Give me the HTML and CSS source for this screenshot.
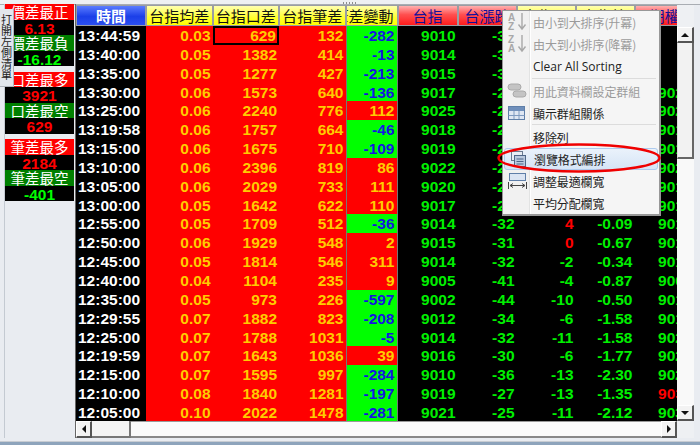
FILE: index.html
```html
<!DOCTYPE html>
<html>
  <head>
    <meta charset="UTF-8" />
    <title>報價表</title>
    <link rel="stylesheet" href="styles.css">
  </head>
  <body>
    <div class="app">
      <div class="top-bar"><span class="grip"></span></div>
      <div class="main">
        <div class="side">
          <div class="group">
            <div class="label red">價差最正</div><div class="value red-text">6.13</div>
            <div class="label green">價差最負</div><div class="value green-text">-16.12</div>
          </div>
          <div class="group">
            <div class="label red">口差最多</div><div class="value red-text">3921</div>
            <div class="label green">口差最空</div><div class="value red-text">629</div>
          </div>
          <div class="group">
            <div class="label red">筆差最多</div><div class="value red-text">2184</div>
            <div class="label green">筆差最空</div><div class="value green-text">-401</div>
          </div>
        </div>
        <div class="grid-wrap">
          <div class="table">
            <div class="row head">
              <div class="blue">時間</div>
              <div class="yellow">台指均差</div>
              <div class="yellow">台指口差</div>
              <div class="yellow">台指筆差</div>
              <div class="yellow clip">筆差變動</div>
              <div class="pink">台指</div>
              <div class="pink">台漲跌</div>
              <div class="yellow">台指量</div>
              <div class="yellow">台指比</div>
              <div class="pink">期權</div>
            </div>
            <div class="row"><div>13:44:59</div><div>0.03</div><div class="selected">629</div><div>132</div><div class="down">-282</div><div>9010</div><div>-36</div><div></div><div></div><div></div></div>
            <div class="row"><div>13:40:00</div><div>0.05</div><div>1382</div><div>414</div><div class="down">-13</div><div>9014</div><div>-32</div><div></div><div></div><div></div></div>
            <div class="row"><div>13:35:00</div><div>0.05</div><div>1277</div><div>427</div><div class="down">-213</div><div>9015</div><div>-31</div><div></div><div></div><div></div></div>
            <div class="row"><div>13:30:00</div><div>0.06</div><div>1573</div><div>640</div><div class="down">-136</div><div>9017</div><div>-29</div><div></div><div></div><div>9021</div></div>
            <div class="row"><div>13:25:00</div><div>0.06</div><div>2240</div><div>776</div><div class="up">112</div><div>9025</div><div>-21</div><div></div><div></div><div>9025</div></div>
            <div class="row"><div>13:19:58</div><div>0.06</div><div>1757</div><div>664</div><div class="down">-46</div><div>9018</div><div>-28</div><div></div><div></div><div>9018</div></div>
            <div class="row"><div>13:15:00</div><div>0.06</div><div>1675</div><div>710</div><div class="down">-109</div><div>9019</div><div>-27</div><div></div><div></div><div>9019</div></div>
            <div class="row"><div>13:10:00</div><div>0.06</div><div>2396</div><div>819</div><div class="up">86</div><div>9022</div><div>-24</div><div></div><div></div><div>9022</div></div>
            <div class="row"><div>13:05:00</div><div>0.06</div><div>2029</div><div>733</div><div class="up">111</div><div>9020</div><div>-26</div><div></div><div></div><div>9017</div></div>
            <div class="row"><div>13:00:00</div><div>0.05</div><div>1642</div><div>622</div><div class="up">110</div><div>9017</div><div>-29</div><div></div><div></div><div>9016</div></div>
            <div class="row"><div>12:55:00</div><div>0.05</div><div>1709</div><div>512</div><div class="down">-36</div><div>9014</div><div>-32</div><div class="red-text">4</div><div>-0.09</div><div>9014</div></div>
            <div class="row"><div>12:50:00</div><div>0.06</div><div>1929</div><div>548</div><div class="up">2</div><div>9015</div><div>-31</div><div class="red-text">0</div><div>-0.67</div><div>9015</div></div>
            <div class="row"><div>12:45:00</div><div>0.05</div><div>1814</div><div>546</div><div class="up">311</div><div>9014</div><div>-32</div><div>-2</div><div>-0.34</div><div>9014</div></div>
            <div class="row"><div>12:40:00</div><div>0.04</div><div>1104</div><div>235</div><div class="up">9</div><div>9005</div><div>-41</div><div>-4</div><div>-0.87</div><div>9005</div></div>
            <div class="row"><div>12:35:00</div><div>0.05</div><div>973</div><div>226</div><div class="down">-597</div><div>9002</div><div>-44</div><div>-10</div><div>-0.50</div><div>9012</div></div>
            <div class="row"><div>12:29:55</div><div>0.07</div><div>1882</div><div>823</div><div class="down">-208</div><div>9012</div><div>-34</div><div>-6</div><div>-1.58</div><div>9012</div></div>
            <div class="row"><div>12:25:00</div><div>0.07</div><div>1788</div><div>1031</div><div class="down">-5</div><div>9014</div><div>-32</div><div>-11</div><div>-1.58</div><div>9025</div></div>
            <div class="row"><div>12:19:59</div><div>0.07</div><div>1643</div><div>1036</div><div class="up">39</div><div>9016</div><div>-30</div><div>-6</div><div>-1.77</div><div>9027</div></div>
            <div class="row"><div>12:15:00</div><div>0.07</div><div>1595</div><div>997</div><div class="down">-284</div><div>9010</div><div>-36</div><div>-13</div><div>-2.30</div><div>9028</div></div>
            <div class="row"><div>12:10:00</div><div>0.08</div><div>1840</div><div>1281</div><div class="down">-197</div><div>9019</div><div>-27</div><div>-13</div><div>-1.35</div><div class="red-text">9030</div></div>
            <div class="row"><div>12:05:00</div><div>0.10</div><div>2022</div><div>1478</div><div class="down">-281</div><div>9021</div><div>-25</div><div>-11</div><div>-2.12</div><div>9032</div></div>
          </div>

          <div class="vscroll">
            <div class="vscroll-gap"></div>
            <div class="btn"><span class="arrow-up"></span></div>
            <div class="vthumb"></div>
            <div class="vtrack"></div>
            <div class="btn"><span class="arrow-down"></span></div>
          </div>
          <div class="hscroll">
            <div class="btn"><span class="arrow-left"></span></div>
            <div class="hthumb"></div>
            <div class="htrack"></div>
            <div class="btn"><span class="arrow-right"></span></div>
          </div>
          <div class="corner"></div>
        </div>
      </div>
      <div class="bottom-bar"></div>

      <div class="side-tab">打開左側清單</div>

      <div class="menu">
        <div class="item off">
          <span class="icon">
            <svg width="22" height="20" viewBox="0 0 22 20">
              <text x="1" y="9" class="az">A</text><text x="1" y="18" class="az">Z</text>
              <path d="M15 1v15M11.5 12.5l3.5 4.5 3.5-4.5" fill="none" stroke="#a8a8a8" stroke-width="1.4"/>
            </svg>
          </span>由小到大排序(升冪)
        </div>
        <div class="item off">
          <span class="icon">
            <svg width="22" height="20" viewBox="0 0 22 20">
              <text x="1" y="9" class="az">Z</text><text x="1" y="18" class="az">A</text>
              <path d="M15 1v15M11.5 12.5l3.5 4.5 3.5-4.5" fill="none" stroke="#a8a8a8" stroke-width="1.4"/>
            </svg>
          </span>由大到小排序(降冪)
        </div>
        <div class="item latin"><span class="icon"></span>Clear All Sorting</div>
        <div class="sep"></div>
        <div class="item off">
          <span class="icon">
            <svg width="22" height="20" viewBox="0 0 22 20">
              <rect x="1" y="3" width="13" height="6" rx="3" fill="#c4c4c4" stroke="#aaa"/>
              <rect x="6" y="10" width="13" height="6" rx="3" fill="#c4c4c4" stroke="#aaa"/>
            </svg>
          </span>用此資料欄設定群組
        </div>
        <div class="item">
          <span class="icon">
            <svg width="22" height="20" viewBox="0 0 22 20">
              <rect x="1.5" y="3.5" width="16" height="13" fill="#dfe7f3" stroke="#5f7fa8"/>
              <rect x="2" y="4" width="15" height="4" fill="#6f8fbb"/>
              <path d="M1.5 12.5h16M7 8v8M12 8v8" stroke="#7f9bc0"/>
            </svg>
          </span>顯示群組關係
        </div>
        <div class="sep tight"></div>
        <div class="item"><span class="icon"></span>移除列</div>
        <div class="item hot">
          <span class="icon">
            <svg width="22" height="20" viewBox="0 0 22 20">
              <rect x="3.5" y="2.5" width="11" height="9" fill="#e8edf4" stroke="#6a7a90"/>
              <rect x="6.5" y="6.5" width="11" height="11" fill="#b9c9df" stroke="#4f6688"/>
              <path d="M8.5 10h7M8.5 12.5h7M8.5 15h7" stroke="#4f6688"/>
            </svg>
          </span>瀏覽格式編排
        </div>
        <div class="item">
          <span class="icon">
            <svg width="22" height="20" viewBox="0 0 22 20">
              <rect x="2.5" y="2.5" width="16" height="7" fill="#dbe5f3" stroke="#5f7fa8"/>
              <path d="M1.5 11v7M19.5 11v7M3 14.5h15M3 14.5l3-2M3 14.5l3 2M18 14.5l-3-2M18 14.5l-3 2" fill="none" stroke="#444"/>
            </svg>
          </span>調整最適欄寬
        </div>
        <div class="item"><span class="icon"></span>平均分配欄寬</div>
      </div>

      <svg class="ring" width="168" height="34" viewBox="0 0 168 34">
        <ellipse cx="83" cy="17" rx="80.5" ry="13.5" fill="none" stroke="#f00000" stroke-width="2.5"/>
      </svg>
    </div>
  </body>
</html>
```

FILE: styles.css
```css
* {
  box-sizing: border-box;
}

body {
  margin: 0;
  background-color: #e9ecf1;
  font-family: "Liberation Sans", "Noto Sans CJK TC", sans-serif;
}

.app {
  position: relative;
  display: flex;
  flex-direction: column;
  width: 700px;
  height: 445px;
  overflow: hidden;
  background-color: #e9ecf1;
}

.top-bar {
  display: flex;
  justify-content: center;
  height: 5px;
  padding-top: 2px;
  background-color: #eef0f3;
  border-bottom: 1px solid #a9adb3;
}

.grip {
  width: 14px;
  height: 2px;
  background-image: linear-gradient(90deg, #8d8d8d 50%, transparent 50%);
  background-size: 3px 2px;
}

.main {
  display: flex;
  flex: 1;
  min-height: 0;
  padding-left: 5px;
  padding-right: 5px;
}

.bottom-bar {
  height: 7px;
  background: linear-gradient(#e9ecf1 0 3px, #c8ccd2 3px 4px, #8ea4bc 4px);
}

/* left summary list */
.side {
  width: 72px;
  flex: none;
  margin-top: -1px;
  margin-left: -1px;
  padding-right: 1px;
  border-right: 1px solid #666;
  border-left: 1px solid #c4cad2;
}

.group {
  margin-bottom: 5.5px;
}

.label {
  height: 15.5px;
  font-size: 14.5px;
  line-height: 18px;
  text-align: center;
  color: #fff;
  white-space: nowrap;
  overflow: hidden;
}

.label.red {
  background-color: #ff0000;
}

.label.green {
  background-color: #008000;
}

.value {
  height: 15.5px;
  background-color: #000;
  font-size: 15.5px;
  font-weight: bold;
  line-height: 18px;
  text-align: center;
  overflow: hidden;
}

.red-text {
  color: #ff0000 !important;
}

.green-text {
  color: #00ff00;
}

.side-tab {
  position: absolute;
  left: 0;
  top: 9px;
  width: 14px;
  height: 78px;
  padding-top: 6px;
  background-color: #e2e6ec;
  border-right: 1px solid #aeb3ba;
  border-bottom: 1px solid #aeb3ba;
  font-size: 11px;
  line-height: 11px;
  text-align: center;
  color: #222;
}

/* quote table */
.grid-wrap {
  display: grid;
  flex: 1;
  grid-template-columns: 601px 17px;
  grid-template-rows: 416px 17px;
}

.table {
  overflow: hidden;
  background-color: #000;
}

.row {
  display: grid;
  grid-template-columns: 70px 66.5px 66.5px 66.5px 52px 60px 59px 59px 59px 60px;
  height: 18.85px;
  font-size: 15.5px;
  font-weight: bold;
  line-height: 20px;
  color: #00f000;
  white-space: nowrap;
}

.row > div {
  padding-right: 2px;
  text-align: right;
  overflow: hidden;
}

.row > div:first-child {
  padding: 0 0 0 2px;
  text-align: left;
  color: #fff;
}

.row > div:nth-child(2),
.row > div:nth-child(3),
.row > div:nth-child(4) {
  background-color: #ff0000;
  color: #ffcc00;
}

.row > div:nth-child(5) {
  border-left: 1px solid #777;
  border-right: 1px solid #777;
}

.row > .down {
  background-color: #00ff00;
  color: #1414e0;
}

.row > .up {
  background-color: #ff0000;
  color: #ffcc00;
}

.row > .selected {
  border: 2px solid #000;
  line-height: 16px;
  padding-right: 1px;
}

.row.head {
  height: 21px;
  font-size: 15px;
  font-weight: normal;
  font-family: "Noto Sans CJK TC", sans-serif;
  line-height: 20px;
  background-color: #9a9da3;
}

.row.head > div {
  padding: 0;
  text-align: center;
  border: 1px solid #9a9da3;
}

.row.head > .blue {
  padding: 0;
  text-align: center;
  background: linear-gradient(#5a7cff, #1b3fe8 55%, #2b4ff0);
  color: #fff;
  font-weight: bold;
}

.row.head > .yellow {
  background: linear-gradient(#ffffb0, #ffff30 60%, #ffff00);
  color: #111;
}

.row.head > .pink {
  background: linear-gradient(#ffb0b0, #ff5050 45%, #ff1c1c);
  color: #10109a;
}

.row.head > .clip {
  display: flex;
  justify-content: flex-end;
  padding-right: 3px;
  color: #111;
}

/* scrollbars */
.vscroll {
  display: flex;
  flex-direction: column;
  background-color: #f4f4f4;
}

.vscroll-gap {
  height: 22px;
  background-color: #eef0f3;
}

.vthumb {
  height: 116px;
  background-color: #f2f2f2;
  border-right: 2px solid #666;
  border-bottom: 2px solid #666;
  border-left: 1px solid #ddd;
}

.vtrack {
  flex: 1;
  background-color: #f9f9f9;
}

.vscroll .btn {
  height: 16px;
  flex: none;
}

.hscroll {
  display: flex;
  background-color: #f5f5f5;
}

.hthumb {
  width: 39px;
  background-color: #f4f4f4;
  border-right: 2px solid #777;
  border-bottom: 2px solid #777;
}

.htrack {
  flex: 1;
  background-color: #fafafa;
  border-top: 1px solid #999;
  border-bottom: 2px solid #888;
}

.hscroll .btn {
  width: 16px;
  flex: none;
}

.corner {
  background-color: #eef0f3;
}

.btn {
  display: flex;
  align-items: center;
  justify-content: center;
  background-color: #f3f3f3;
  border-top: 1px solid #fff;
  border-left: 1px solid #fff;
  border-right: 2px solid #555;
  border-bottom: 2px solid #555;
}

.arrow-up,
.arrow-down,
.arrow-left,
.arrow-right {
  width: 0;
  height: 0;
  border: 4px solid transparent;
}

.arrow-up {
  border-top: none;
  border-bottom-color: #111;
}

.arrow-down {
  border-bottom: none;
  border-top-color: #111;
}

.arrow-left {
  border-left: none;
  border-right-color: #111;
}

.arrow-right {
  border-right: none;
  border-left-color: #111;
}

/* context menu */
.menu {
  position: absolute;
  left: 502px;
  top: 10px;
  width: 159px;
  height: 206px;
  padding: 0 1px;
  background: linear-gradient(90deg, #f1f1f1 26px, #e2e3e3 26px 27px, #fff 27px 28px, #f5f5f5 28px);
  border: 1px solid #979797;
  border-width: 1px 2px 2px 1px;
  font-family: "Noto Sans CJK TC", sans-serif;
  font-size: 12px;
  color: #222;
}

.item {
  display: flex;
  align-items: center;
  height: 22px;
  white-space: nowrap;
  letter-spacing: -0.1px;
}

.item.off {
  color: #9b9b9b;
}

.item.latin {
  font-family: "Open Sans", sans-serif;
  letter-spacing: 0;
}

.item.hot {
  background: linear-gradient(#eaf2fb, #d6e5f6);
  border: 1px solid #aecbee;
  border-radius: 3px;
}

.icon {
  display: flex;
  flex: none;
  align-items: center;
  width: 29px;
  padding-left: 3px;
}

.az {
  font-family: "Liberation Sans", sans-serif;
  font-size: 10px;
  font-weight: bold;
  fill: #a8a8a8;
}

.sep {
  height: 1px;
  margin: 1px 2px 1px 28px;
  background-color: #dcdcdc;
}

.sep.tight {
  margin-top: 0;
}

.ring {
  position: absolute;
  left: 496px;
  top: 141px;
}
```
